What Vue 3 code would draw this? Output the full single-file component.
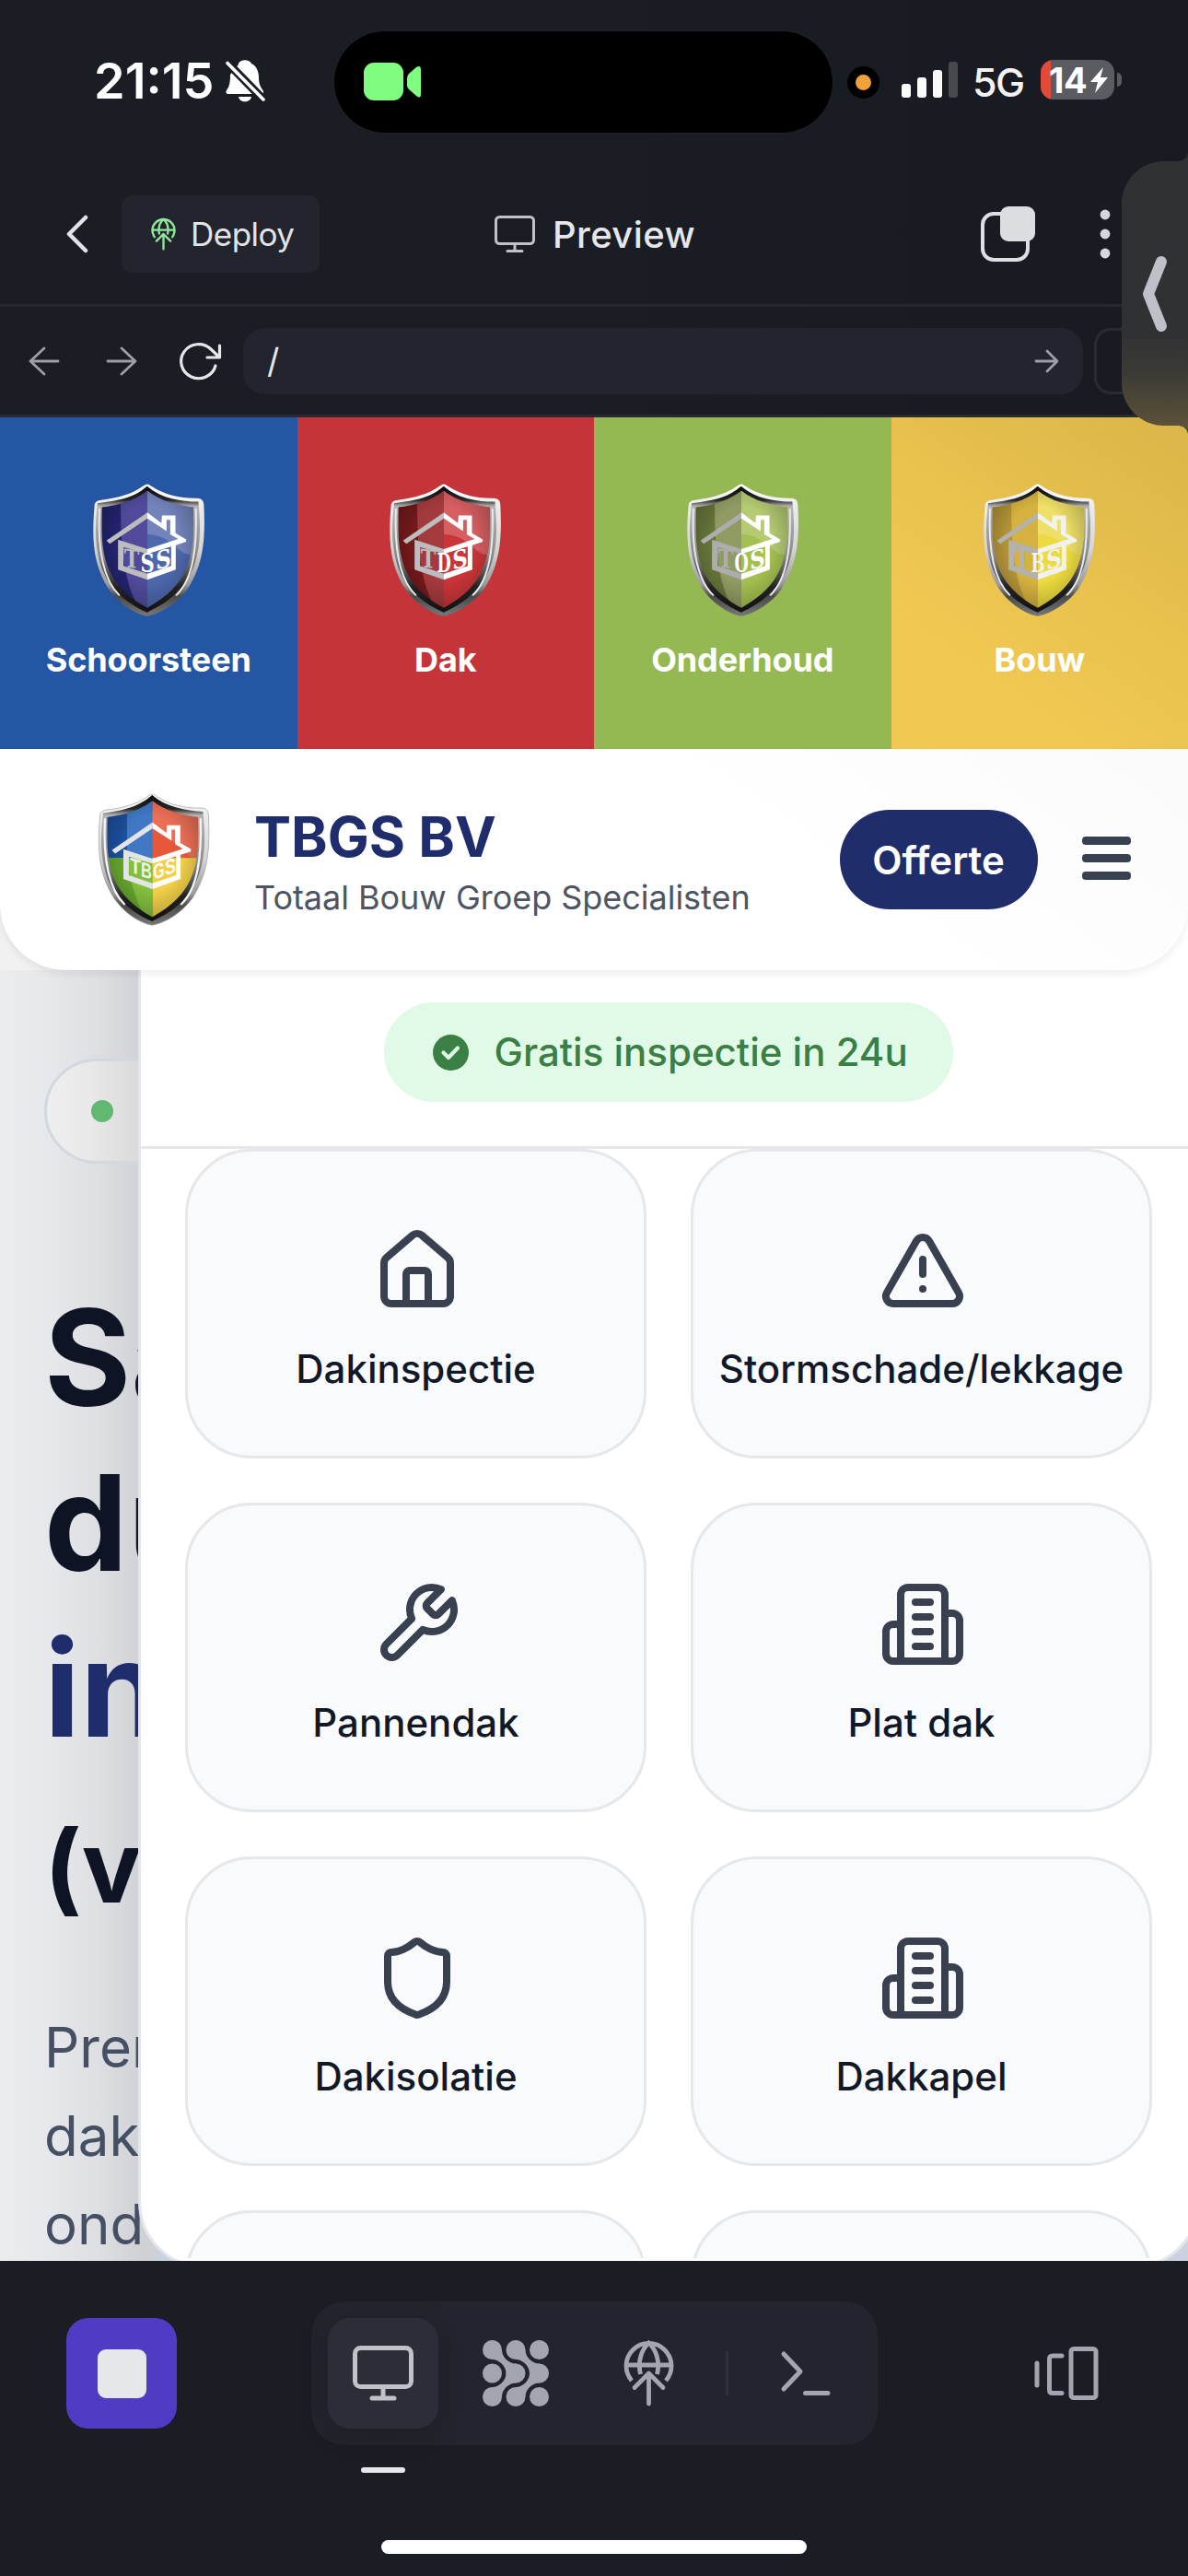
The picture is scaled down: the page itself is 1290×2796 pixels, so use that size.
<script setup>
const tiles = [
  { name: 'Schoorsteen', code: 'TSS', bg: '#2456a3', l1: '#23236f', l2: '#514a9b', r1: '#7d8bc0', r2: '#4e68ae', ink: '#fff', shade: '#bdbdbd' },
  { name: 'Dak', code: 'TDS', bg: '#c43438', l1: '#74191b', l2: '#a33a3d', r1: '#d9696b', r2: '#c93538', ink: '#fff', shade: '#bdbdbd' },
  { name: 'Onderhoud', code: 'TOS', bg: '#95b952', l1: '#66753a', l2: '#8f9b62', r1: '#b9cc7b', r2: '#a4c050', ink: '#fff', shade: '#adadad' },
  { name: 'Bouw', code: 'TBS', bg: 'linear-gradient(215deg,#dab548 0%,#eac34f 50%,#f0c852 75%)', l1: '#b39438', l2: '#d5b13f', r1: '#eee070', r2: '#ecdb40', ink: '#f1f1ee', shade: '#b3b2ae' },
]
const icons = {
  home: ['M15 21v-8a1 1 0 0 0-1-1h-4a1 1 0 0 0-1 1v8', 'M3 10a2 2 0 0 1 .709-1.528l7-5.999a2 2 0 0 1 2.582 0l7 5.999A2 2 0 0 1 21 10v9a2 2 0 0 1-2 2H5a2 2 0 0 1-2-2z'],
  alert: ['m21.73 18-8-14a2 2 0 0 0-3.48 0l-8 14A2 2 0 0 0 4 21h16a2 2 0 0 0 1.73-3', 'M12 9v4', 'M12 17h.01'],
  wrench: ['M14.7 6.3a1 1 0 0 0 0 1.4l1.6 1.6a1 1 0 0 0 1.4 0l3.77-3.77a6 6 0 0 1-7.94 7.94l-6.91 6.91a2.12 2.12 0 0 1-3-3l6.91-6.91a6 6 0 0 1 7.94-7.94l-3.76 3.76z'],
  building: ['M6 22V4a2 2 0 0 1 2-2h8a2 2 0 0 1 2 2v18Z', 'M6 12H4a2 2 0 0 0-2 2v6a2 2 0 0 0 2 2h2', 'M18 9h2a2 2 0 0 1 2 2v9a2 2 0 0 1-2 2h-2', 'M10 6h4', 'M10 10h4', 'M10 14h4', 'M10 18h4'],
  shield: ['M20 13c0 5-3.5 7.5-7.66 8.95a1 1 0 0 1-.67-.01C7.5 20.5 4 18 4 13V6a1 1 0 0 1 1-1c2 0 4.5-1.2 6.24-2.72a1.17 1.17 0 0 1 1.52 0C14.51 3.81 17 5 19 5a1 1 0 0 1 1 1z'],
}
const services = [
  { label: 'Dakinspectie', icon: 'home' },
  { label: 'Stormschade/lekkage', icon: 'alert' },
  { label: 'Pannendak', icon: 'wrench' },
  { label: 'Plat dak', icon: 'building' },
  { label: 'Dakisolatie', icon: 'shield' },
  { label: 'Dakkapel', icon: 'building' },
  { label: '', icon: '' },
  { label: '', icon: '' },
]
const face = 'M241 97C285 132 340 144 392 151C395 300 388 400 241 480C94 400 88 300 92 151C142 144 197 132 241 97Z'
const rim = 'M240 75C246 75 250 79 256 83C300 112 350 122 405 121C420 122 426 130 426 145C432 260 424 340 372 420C335 468 290 495 248 506Q240 509 232 506C192 495 150 468 115 420C64 340 58 260 68 145C68 135 76 128 90 127C145 120 190 108 226 82C232 78 236 75 240 75Z'
</script>

<template>
  <div class="screen">
    <svg class="defs" width="0" height="0" aria-hidden="true">
      <defs>
        <linearGradient id="metal" x1="0" y1="0" x2="0" y2="1">
          <stop offset="0" stop-color="#fff" />
          <stop offset=".14" stop-color="#eee" />
          <stop offset=".5" stop-color="#d4d4d4" />
          <stop offset=".76" stop-color="#9a9a9a" />
          <stop offset=".85" stop-color="#4a4a4a" />
          <stop offset="1" stop-color="#777" />
        </linearGradient>
        <linearGradient id="bevel" x1="0" y1="0" x2="0" y2="1">
          <stop offset="0" stop-color="#0c0c0c" />
          <stop offset=".11" stop-color="#262626" />
          <stop offset=".16" stop-color="#b5b5b5" />
          <stop offset=".55" stop-color="#8a8a8a" />
          <stop offset=".8" stop-color="#222" />
          <stop offset="1" stop-color="#111" />
        </linearGradient>
        <radialGradient id="vignette" cx=".5" cy=".45" r=".62">
          <stop offset=".5" stop-color="#000" stop-opacity="0" />
          <stop offset="1" stop-color="#000" stop-opacity=".28" />
        </radialGradient>
        <clipPath id="faceClip"><path :d="face" /></clipPath>
        <g id="house-left">
          <path d="M107 260L241 168V188L118 271ZM145 257L241 288V304L163 281V343L241 369V388L145 355Z" />
        </g>
        <g id="house-right">
          <path d="M241 168L287 203L289 178H333V236L368 256V264L334 275V355L241 388V369L319 343V280L241 304V288L342 255L316 240V192H304V229L241 188Z" />
        </g>
        <g id="globe-up" fill="none" stroke="currentColor" stroke-width="4.800" stroke-linecap="butt">
          <path d="M9 44A24.500 24.500 0 1 1 46 44M3 27H52M18.500 37C15 22 20 10 27.500 3C35 10 40 22 36.500 37" />
          <path d="M27.500 69V36M12 51.500L27.500 36L43 51.500" stroke-linecap="round" stroke-linejoin="round" />
        </g>
      </defs>
    </svg>

    <header class="status">
      <span class="time">21:15</span>
      <svg class="bell" width="43" height="46" viewBox="0 0 43 46">
        <path fill="#fff" d="M11 9C13 6 14 5 14 4C16-1 26-1 28 4C33 6 36 12 36 19C36 27 38 29 41 34V37H3C0 37 0 34 1 33C4 29 5 25 5 16ZM14 40H28C27 47 15 47 14 40Z" />
        <path d="M2 3L41 43" stroke="#1a1c24" stroke-width="9" />
        <path d="M2 3.500L41 43" stroke="#fff" stroke-width="3.600" stroke-linecap="round" />
      </svg>
      <div class="island">
        <svg width="63" height="42" viewBox="0 0 63 42" fill="#80fc80">
          <rect width="43" height="41" rx="11" />
          <path d="M47 17Q47 14 49 12L57 5Q62 2 62 8V34Q62 40 57 36L49 29Q47 27 47 25Z" />
        </svg>
      </div>
      <i class="mic"></i>
      <div class="bars"><i></i><i></i><i></i><i></i></div>
      <span class="net">5G</span>
      <div class="battery">
        <span>14</span>
        <svg width="20" height="28" viewBox="0 0 20 28"><path fill="#fff" d="M14 0L0 16H8L5 28L19 11H11Z" /></svg>
      </div>
      <i class="nub"></i>
    </header>

    <div class="toolbar">
      <svg class="back" width="24" height="42" viewBox="0 0 24 42"><path d="M21 3L3 21L21 39" /></svg>
      <div class="deploy">
        <svg width="27" height="36" viewBox="0 0 55 72"><use href="#globe-up" /></svg>
        <span>Deploy</span>
      </div>
      <div class="preview">
        <svg width="44" height="41" viewBox="0 0 44 41" class="mon"><rect x="1.500" y="1.500" width="41" height="29" rx="4" /><path d="M22 31V38M14 38.500H30" /></svg>
        <span>Preview</span>
      </div>
      <svg class="copy" width="60" height="60" viewBox="0 0 60 60">
        <rect x="2" y="8" width="49" height="50" rx="12" fill="none" stroke="#dedfe3" stroke-width="4" />
        <rect x="21" y="0" width="38" height="38" rx="9" fill="#dcdde1" />
      </svg>
      <svg class="dots" width="12" height="54" viewBox="0 0 12 54" fill="#d6d7dc"><circle cx="6" cy="6" r="5.400" /><circle cx="6" cy="27" r="5.400" /><circle cx="6" cy="48" r="5.400" /></svg>
    </div>

    <div class="address">
      <svg width="34" height="32" viewBox="0 0 34 32" class="dim"><path d="M32 16H2M17 2L2 16L17 30" /></svg>
      <svg width="34" height="32" viewBox="0 0 34 32" class="dim fwd"><path d="M2 16H32M17 2L32 16L17 30" /></svg>
      <svg width="46" height="42" viewBox="0 0 46 42" class="reload"><path d="M39 26A19 18.500 0 1 1 34 8L43 16.500M43.500 4V17H30" /></svg>
      <div class="url">
        <span>/</span>
        <svg width="26" height="26" viewBox="0 0 26 26" class="dim"><path d="M1 13H24M13 2L24 13L13 24" /></svg>
      </div>
      <div class="device"></div>
    </div>

    <nav class="tiles">
      <a v-for="t in tiles" :key="t.name" class="tile" :style="{ background: t.bg }">
        <svg width="121" height="144" viewBox="63 75 365 432">
          <path :d="rim" fill="url(#metal)" />
          <path d="M240 82C290 124 350 132 408 133C424 280 412 420 240 495C70 420 62 280 78 138C132 130 190 126 240 82Z" fill="url(#bevel)" />
          <path d="M84 155C78 280 92 385 150 440M400 155C404 280 392 385 335 440" fill="none" stroke="#e9e9e9" stroke-width="6" />
          <g clip-path="url(#faceClip)">
            <rect x="80" y="90" width="161" height="400" :fill="t.l1" />
            <path d="M154 90H241V490H220C170 420 150 300 154 90Z" :fill="t.l2" />
            <rect x="241" y="90" width="160" height="400" :fill="t.r2" />
            <path d="M241 90H400V300C350 330 330 240 241 240Z" :fill="t.r1" opacity=".8" />
            <rect x="80" y="90" width="320" height="400" fill="url(#vignette)" />
          </g>
          <use href="#house-left" :fill="t.shade" />
          <use href="#house-right" :fill="t.ink" />
          <g class="mono">
            <text transform="translate(190 349) skewY(6)" textLength="50" lengthAdjust="spacingAndGlyphs" :fill="t.shade">{{ t.code[0] }}</text>
            <text transform="translate(241 363)" textLength="46" lengthAdjust="spacingAndGlyphs" :fill="t.ink">{{ t.code[1] }}</text>
            <text transform="translate(294 350) skewY(-14)" textLength="50" lengthAdjust="spacingAndGlyphs" :fill="t.ink">{{ t.code[2] }}</text>
          </g>
        </svg>
        <span>{{ t.name }}</span>
      </a>
    </nav>

    <div class="site-head-wrap">
      <div class="site-head">
        <svg width="120" height="142" viewBox="63 75 365 432">
          <path :d="rim" fill="url(#metal)" stroke="#999" stroke-width="2" />
          <path d="M240 78C290 120 350 128 408 133C424 280 412 420 240 495C70 420 62 280 78 138C132 130 190 122 240 78Z" fill="url(#bevel)" />
          <path d="M84 155C78 280 92 385 150 440M400 155C404 280 392 385 335 440" fill="none" stroke="#f3f3f3" stroke-width="7" />
          <g clip-path="url(#faceClip)">
            <path d="M80 90H241V286H80Z" fill="#1c4f9e" /><path d="M157 90H241V286H157Z" fill="#4078c4" />
            <path d="M241 90H400V286H241Z" fill="#e7583a" />
            <path d="M80 286H241V490H80Z" fill="#64a42c" /><path d="M157 286H241V490H220Q170 400 157 286Z" fill="#82bf3e" />
            <path d="M241 286H400V490H241Z" fill="#f1cf49" />
            <path d="M241 90H400V286H370L241 168Z" fill="#fff" opacity=".14" />
            <rect x="80" y="90" width="320" height="400" fill="url(#vignette)" />
          </g>
          <path d="M163 190L241 188L319 250L241 288L145 257Z" fill="none" />
          <use href="#house-left" fill="#e2e4e6" />
          <use href="#house-right" fill="#fff" />
          <g class="mono sans">
            <text transform="translate(185 338) skewY(15)" textLength="36" lengthAdjust="spacingAndGlyphs" fill="#edf3e8">T</text>
            <text transform="translate(221 351) skewY(15)" textLength="36" lengthAdjust="spacingAndGlyphs" fill="#edf3e8">B</text>
            <text transform="translate(262 351) skewY(-15)" textLength="38" lengthAdjust="spacingAndGlyphs" fill="#fff">G</text>
            <text transform="translate(300 338) skewY(-15)" textLength="36" lengthAdjust="spacingAndGlyphs" fill="#fff">S</text>
          </g>
        </svg>
        <div class="brand">
          <strong>TBGS BV</strong>
          <span>Totaal Bouw Groep Specialisten</span>
        </div>
        <button class="quote">Offerte</button>
        <div class="burger"><i></i><i></i><i></i></div>
      </div>
    </div>

    <main class="stage">
      <div class="hero">
        <div class="badge"><i></i></div>
        <h1>Sa<br />du<br /><em>in</em><br /><small>(v</small></h1>
        <p>Prem<br />dak<br />ond</p>
      </div>
      <aside class="drawer">
        <div class="promo">
          <div class="chip">
            <svg width="39" height="39" viewBox="0 0 39 39"><circle cx="19.500" cy="19.500" r="19.500" fill="#3a7f43" /><path d="M11.500 19.500L17 25L27 14.500" fill="none" stroke="#e1f9e7" stroke-width="4.200" stroke-linecap="round" stroke-linejoin="round" /></svg>
            <span>Gratis inspectie in 24u</span>
          </div>
        </div>
        <div class="grid">
          <div v-for="(s, i) in services" :key="i" class="card">
            <svg v-if="s.icon" width="96" height="96" viewBox="0 0 24 24"><path v-for="d in icons[s.icon]" :key="d" :d="d" /></svg>
            <span>{{ s.label }}</span>
          </div>
        </div>
      </aside>
    </main>

    <footer class="dock">
      <div class="dock-row">
        <div class="stop"><i></i></div>
        <div class="group">
          <div class="cell active">
            <svg width="66" height="60" viewBox="0 0 66 60" class="mon"><rect x="2.500" y="2.500" width="61" height="42" rx="6" /><path d="M33 46V56M21 57H45" /></svg>
          </div>
          <div class="cell">
            <svg width="72" height="72" viewBox="-10.500 -10.500 72 72" fill="#a3a6b0">
              <circle v-for="n in 9" :key="n" :cx="((n - 1) % 3) * 25.500" :cy="Math.floor((n - 1) / 3) * 25.500" r="10.500" />
              <g v-for="x in [0, 25.500]" :key="x">
                <path v-for="f in [0, 1]" :key="f" :transform="`translate(${x} ${f * 51}) scale(1 ${f ? -1 : 1})`" d="M10.500 0C10.500 8 18 15 25.500 15L36 25.500H15C15 17.500 7.500 10.500 0 10.500Z" />
              </g>
            </svg>
          </div>
          <div class="cell"><svg width="55" height="72" viewBox="0 0 55 72"><use href="#globe-up" /></svg></div>
          <i class="sep"></i>
          <div class="cell">
            <svg width="54" height="48" viewBox="0 0 54 48" class="term"><path d="M3 3L21 22L3 41M26.500 45.500H51" /></svg>
          </div>
        </div>
        <svg width="70" height="60" viewBox="0 0 70 60" class="panels"><path d="M3 19V43M30 11H20Q16.500 11 16.500 14.500V48Q16.500 51.500 20 51.500H30" /><rect x="40" y="3.500" width="27" height="53" rx="3" /></svg>
      </div>
      <i class="tick"></i>
      <i class="home-bar"></i>
    </footer>

    <div class="handle">
      <svg width="27" height="82" viewBox="0 0 27 82"><path d="M20 6L6 41L20 76" /></svg>
    </div>
  </div>
</template>

<style>
body { margin: 0; background: #1a1c24; }
</style>

<style scoped>
.screen { position: relative; display: flex; flex-direction: column; width: 1290px; height: 2796px; overflow: hidden; background: linear-gradient(90deg, #1a1d24 50%, #191a22); font-family: Inter, "Liberation Sans", sans-serif; color: #fff; }
.screen * { box-sizing: border-box; }
svg { display: block; flex: none; overflow: visible; }
.defs { position: absolute; }
i { display: block; flex: none; font-style: normal; }

.status { display: flex; align-items: center; height: 178px; padding-left: 102px; }
.time { flex: none; width: 143px; padding-bottom: 3px; font-size: 54px; font-weight: 600; letter-spacing: 0; white-space: nowrap; }
.bell { margin-bottom: 2px; }
.island { display: flex; flex: none; align-items: center; width: 541px; height: 110px; margin-left: 75px; padding-left: 32px; border-radius: 55px; background: #000; box-shadow: 0 0 0 2px #1c1f25; }
.mic { width: 35px; height: 35px; margin-left: 16px; border: 9px solid #000; border-radius: 50%; background: #f0a13a; }
.bars { display: flex; align-items: flex-end; gap: 7px; height: 39px; margin: 0 0 5px 24px; }
.bars i { width: 10px; height: 15px; border-radius: 3px; background: #fafafa; }
.bars i:nth-child(2) { height: 22px; }
.bars i:nth-child(3) { height: 30px; }
.bars i:nth-child(4) { height: 39px; background: #48494e; }
.net { width: 72px; margin-left: 16px; font-size: 43px; font-weight: 500; letter-spacing: -1.5px; color: #f3f3f3; }
.battery { display: flex; align-items: center; width: 80px; height: 43px; margin: 0 0 5px 2px; padding-left: 9px; border-radius: 14px; background: linear-gradient(90deg, #e24b3a 11px, #5b5c61 11px); }
.battery span { width: 45px; font-size: 38px; font-weight: 700; letter-spacing: -.5px; color: #fff; }
.nub { width: 5px; height: 15px; margin: 0 0 5px 3px; border-radius: 0 5px 5px 0; background: #5b5c61; }

.toolbar { display: flex; align-items: center; height: 155px; border-bottom: 3px solid #252831; }
.back { margin-left: 72px; fill: none; stroke: #e3e4e8; stroke-width: 4.500; stroke-linecap: round; stroke-linejoin: round; }
.deploy { display: flex; align-items: center; width: 215px; height: 84px; margin-left: 36px; padding-left: 32px; gap: 16px; border-radius: 12px; background: #22252d; color: #8fe89a; }
.deploy span { font-size: 35px; letter-spacing: -.5px; color: #e3e4e8; }
.preview { display: flex; align-items: center; width: 220px; margin-left: 190px; gap: 19px; font-size: 40px; font-weight: 500; letter-spacing: .4px; color: #e6e7ea; }
.mon { fill: none; stroke: #bfc2c8; stroke-width: 3; stroke-linecap: round; }
.copy { margin-left: 308px; }
.dots { margin-left: 69px; }

.address { display: flex; align-items: center; height: 120px; padding-left: 31px; border-bottom: 3px solid #272a32; }
.dim { fill: none; stroke: #9c9fa8; stroke-width: 2.800; stroke-linecap: round; stroke-linejoin: round; }
.fwd { margin-left: 50px; }
.reload { margin-left: 46px; fill: none; stroke: #e6e7ea; stroke-width: 3.200; stroke-linecap: round; stroke-linejoin: round; }
.url { display: flex; flex: none; align-items: center; justify-content: space-between; width: 912px; height: 72px; margin-left: 23px; padding: 0 26px; border-radius: 24px; background: #22252d; font-size: 37px; color: #e6e7ea; }
.device { flex: none; width: 120px; height: 72px; margin-left: 12px; border: 3px solid #2a2c34; border-radius: 18px; }

.tiles { display: grid; grid-template-columns: repeat(4, 1fr); height: 360px; }
.tile { display: flex; flex-direction: column; align-items: center; padding-top: 72px; }
.tile span { margin-top: 25px; font-size: 36px; line-height: 44px; font-weight: 700; letter-spacing: -.1px; }
.mono { font-family: "DejaVu Serif", serif; font-weight: 700; font-size: 82px; text-anchor: middle; }
.mono.sans { font-family: "Liberation Sans", sans-serif; font-size: 70px; }

.site-head-wrap { position: relative; z-index: 2; height: 240px; background: linear-gradient(90deg, #f1f1f1 150px, #fff 150px); }
.site-head { display: flex; align-items: center; height: 240px; padding-left: 107px; border-radius: 0 0 72px 72px; background: linear-gradient(215deg, #fafafb, #fff 35%); box-shadow: 0 4px 9px rgba(0, 0, 0, .07); }
.brand { display: flex; flex-direction: column; width: 636px; margin: 0 0 2px 49px; }
.brand strong { font-size: 60px; line-height: 84px; font-weight: 700; color: #1f2d6d; }
.brand span { font-size: 36px; line-height: 48px; letter-spacing: -.03px; color: #4b5563; white-space: nowrap; }
.quote { flex: none; width: 215px; height: 108px; border: 0; padding: 0 1px 0 0; border-radius: 54px; background: #1f2d6b; color: #fff; font: 600 42px Inter, sans-serif; }
.burger { display: flex; flex-direction: column; gap: 10px; margin: 0 0 4px 48px; }
.burger i { width: 53px; height: 9px; border-radius: 4px; background: #384152; }

.stage { position: relative; height: 1401px; overflow: hidden; background: #cbd2de; }
.hero { width: 170px; height: 1401px; padding: 96px 0 0 48px; overflow: hidden; background: linear-gradient(90deg, #ebecee, #e5e7ea 60px, #dcdee1 110px, #cfd1d4 155px); }
.badge { width: 160px; height: 114px; padding: 42px 0 0 48px; border: 3px solid #d2d8de; border-radius: 57px; background: linear-gradient(90deg, #eee, #e9e9e9 45px, #d8d8d8 105px); }
.badge i { width: 24px; height: 24px; border-radius: 50%; background: #62b871; }
h1 { margin: 120px 0 0; font-size: 144px; line-height: 180px; font-weight: 700; color: #0f1424; white-space: nowrap; }
h1 em { font-style: normal; color: #1f2d6d; }
h1 small { font-size: 108px; }
.hero p { margin: 58px 0 0; font-size: 60px; line-height: 96px; color: #465064; }
.drawer { position: absolute; left: 150px; top: -60px; width: 1153px; height: 1469px; border: 3px solid #e2e5ea; border-radius: 0 0 72px 72px; background: #fff; }
.promo { display: flex; justify-content: center; height: 251px; padding: 92px 2px 0 0; border-bottom: 3px solid #e5e7eb; }
.chip { display: flex; align-items: center; width: 618px; height: 108px; padding-left: 53px; gap: 28px; border-radius: 54px; background: #e1f9e7; font-size: 42px; font-weight: 500; color: #3a7f43; white-space: nowrap; }
.chip span { padding-bottom: 1px; }
.grid { display: grid; grid-template-columns: 501px 501px; grid-auto-rows: 336px; gap: 48px; padding-left: 48px; height: 1204px; overflow: hidden; }
.card { display: flex; flex-direction: column; align-items: center; padding-top: 81px; border: 3px solid #e5e7eb; border-radius: 72px; background: #f9fafc; }
.card svg { margin-left: 3px; fill: none; stroke: #394150; stroke-width: 2; stroke-linecap: round; stroke-linejoin: round; }
.card span { margin-top: 29px; font-size: 42px; line-height: 60px; font-weight: 500; color: #111827; white-space: nowrap; }

.dock { height: 342px; background: #1a1d24; }
.dock-row { display: flex; align-items: center; padding: 44px 0 0 72px; }
.stop { display: flex; flex: none; align-items: center; justify-content: center; width: 120px; height: 120px; border-radius: 24px; background: #4f3bc4; }
.stop i { width: 53px; height: 53px; border-radius: 9px; background: #e6e7ea; }
.group { display: flex; flex: none; align-items: center; width: 615px; height: 156px; margin-left: 146px; padding-left: 18px; border-radius: 36px; background: #22252d; color: #a3a6b0; }
.cell { display: flex; flex: none; align-items: center; justify-content: center; width: 120px; height: 120px; margin-right: 24px; border-radius: 24px; }
.active { background: #2b2e36; box-shadow: 0 6px 24px rgba(24, 20, 30, .35); }
.active .mon { stroke-width: 5; }
.sep { width: 3px; height: 48px; margin: 0 24px 0 0; background: #30333c; }
.term, .panels { fill: none; stroke: #a3a6b0; stroke-width: 5; stroke-linecap: round; stroke-linejoin: round; }
.panels { margin-left: 170px; }
.tick { width: 48px; height: 6px; margin: 24px 0 0 392px; border-radius: 3px; background: #e6e7ea; }
.home-bar { width: 462px; height: 15px; margin: 73px auto 0; border-radius: 8px; background: #fff; }

.handle { position: absolute; right: 0; top: 175px; z-index: 3; display: flex; align-items: center; width: 72px; height: 287px; padding-left: 23px; border-radius: 46px 0 0 46px; background: linear-gradient(180deg, #303133 0%, #303133 65%, #3b3a36 80%, #5c5238 100%); }
.handle::before, .handle::after { content: ""; position: absolute; right: 0; width: 10px; height: 10px; }
.handle::before { top: -10px; background: radial-gradient(circle at 0 0, transparent 9.500px, #303133 10px); }
.handle::after { bottom: -10px; background: radial-gradient(circle at 0 100%, transparent 9.500px, #5c5238 10px); }
.handle svg { fill: none; stroke: #bfc0ca; stroke-width: 12; stroke-linecap: round; stroke-linejoin: round; }
</style>
